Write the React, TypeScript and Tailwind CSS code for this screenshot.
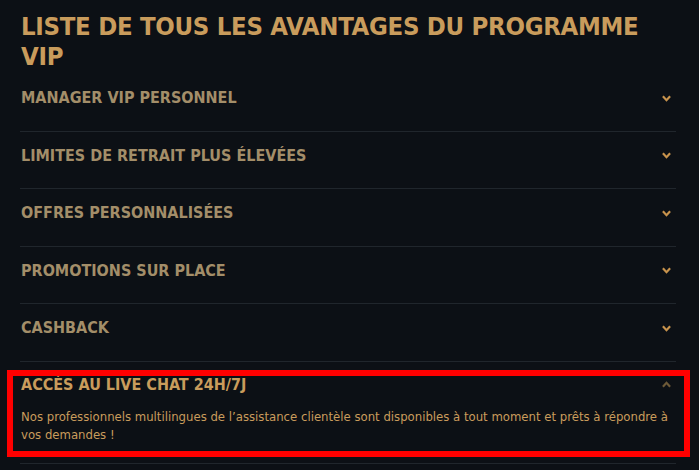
import React from "react";

const items = [
  "MANAGER VIP PERSONNEL",
  "LIMITES DE RETRAIT PLUS ÉLEVÉES",
  "OFFRES PERSONNALISÉES",
  "PROMOTIONS SUR PLACE",
  "CASHBACK",
];

function Chevron({ up = false, className = "" }: { up?: boolean; className?: string }) {
  return (
    <svg
      viewBox="0 0 10 7"
      className={className}
      width="9"
      height="7"
      style={{ transform: up ? "rotate(180deg)" : undefined }}
    >
      <path d="M1 1 L5 5.4 L9 1" fill="none" stroke="currentColor" strokeWidth="2.4" />
    </svg>
  );
}

export default function App() {
  return (
    <div
      className="min-h-[470px] w-full bg-[#0c1015] pl-[20px] pr-[23px] pt-[11px]"
      style={{ fontFamily: '"Liberation Sans Narrow", "DejaVu Sans Condensed", sans-serif' }}
    >
      <h2 className="pl-[1px] text-[25.5px] font-bold uppercase leading-[30px] tracking-[-0.3px] text-[#c99c5c]">
        Liste de tous les avantages du programme VIP
      </h2>

      <div className="mt-[3px]">
        {items.map((label) => (
          <div
            key={label}
            className="flex items-center justify-between border-b border-[#20262c] pb-[23.5px] pl-[1px] pr-[5px] pt-[15px]"
          >
            <span className="text-[16px] font-bold leading-[18px] text-[#a38e69]">{label}</span>
            <Chevron className="text-[#c8934c]" />
          </div>
        ))}

        <div className="relative border-b border-[#20262c] pb-[19px] pl-[1px] pr-[5px] pt-[14px]">
          <div className="flex items-center justify-between">
            <span className="text-[16px] font-bold leading-[18px] text-[#c99c5c]">
              ACCÈS AU LIVE CHAT 24H/7J
            </span>
            <Chevron up className="text-[#6e5a38]" />
          </div>
          <p className="mt-[14px] text-[13px] leading-[18px] text-[#c99c5c]">
            Nos professionnels multilingues de l’assistance clientèle sont disponibles à tout moment et prêts à
            répondre à vos demandes !
          </p>
          <div className="pointer-events-none absolute -left-[13px] -right-[14px] bottom-[6px] top-[8px] border-[6px] border-[#ff0000]" />
        </div>
      </div>
    </div>
  );
}
